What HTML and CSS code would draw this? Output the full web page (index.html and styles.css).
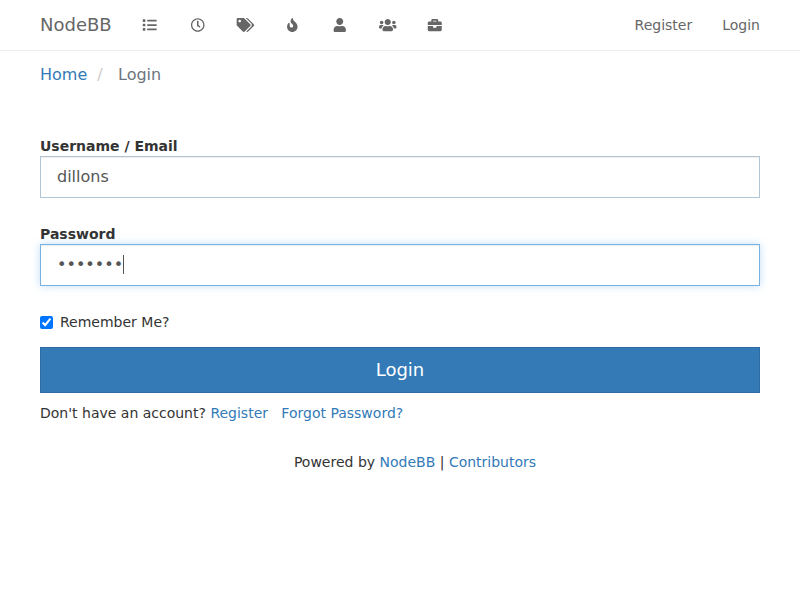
FILE: index.html
```html
<!DOCTYPE html>
<html lang="en">
<head>
<meta charset="utf-8">
<title>Login | NodeBB</title>
<link rel="stylesheet" href="styles.css">
</head>
<body>
<header class="navbar">
  <a class="brand" href="#">NodeBB</a>
  <nav class="nav-icons">
    <a href="#"><svg viewBox="-64 0 640 512"><path d="M80 368H16a16 16 0 0 0-16 16v64a16 16 0 0 0 16 16h64a16 16 0 0 0 16-16v-64a16 16 0 0 0-16-16zm0-320H16A16 16 0 0 0 0 64v64a16 16 0 0 0 16 16h64a16 16 0 0 0 16-16V64a16 16 0 0 0-16-16zm0 160H16a16 16 0 0 0-16 16v64a16 16 0 0 0 16 16h64a16 16 0 0 0 16-16v-64a16 16 0 0 0-16-16zm416 176H176a16 16 0 0 0-16 16v32a16 16 0 0 0 16 16h320a16 16 0 0 0 16-16v-32a16 16 0 0 0-16-16zm0-320H176a16 16 0 0 0-16 16v32a16 16 0 0 0 16 16h320a16 16 0 0 0 16-16V80a16 16 0 0 0-16-16zm0 160H176a16 16 0 0 0-16 16v32a16 16 0 0 0 16 16h320a16 16 0 0 0 16-16v-32a16 16 0 0 0-16-16z"/></svg></a>
    <a href="#"><svg viewBox="-64 0 640 512"><path d="M256 8C119 8 8 119 8 256s111 248 248 248 248-111 248-248S393 8 256 8zm0 448c-110.5 0-200-89.5-200-200S145.500 56 256 56s200 89.500 200 200-89.500 200-200 200zm61.800-104.400l-84.900-61.700c-3.100-2.300-4.900-5.900-4.900-9.700V116c0-6.600 5.400-12 12-12h32c6.600 0 12 5.400 12 12v141.700l66.800 48.600c5.400 3.900 6.500 11.400 2.600 16.800L334.600 349c-3.900 5.300-11.400 6.500-16.800 2.600z"/></svg></a>
    <a href="#"><svg viewBox="-24 0 640 512" overflow="visible"><path d="M497.941 225.941L286.059 14.059A48 48 0 0 0 252.118 0H48C21.490 0 0 21.490 0 48v204.118a48 48 0 0 0 14.059 33.941l211.882 211.882c18.744 18.745 49.136 18.746 67.882 0l204.118-204.118c18.745-18.745 18.745-49.137 0-67.882zM112 160c-26.510 0-48-21.490-48-48s21.490-48 48-48 48 21.490 48 48-21.490 48-48 48zm513.941 133.823L421.823 497.941c-18.745 18.745-49.137 18.745-67.882 0l-.36-.36L527.640 323.522c16.999-16.999 26.362-39.600 26.362-63.640s-9.362-46.641-26.362-63.640L331.397 0h48.721a48 48 0 0 1 33.941 14.059l211.882 211.882c18.745 18.745 18.745 49.137 0 67.882z"/></svg></a>
    <a href="#"><svg viewBox="-112 0 640 512"><path d="M216 23.860c0-23.800-30.650-32.770-44.150-13.040C48 191.850 224 200 224 288c0 35.630-29.110 64.460-64.850 63.990-35.170-.45-63.150-29.770-63.150-64.940v-85.510c0-21.700-26.470-32.230-41.430-16.500C27.800 213.160 0 261.330 0 320c0 105.870 86.130 192 192 192s192-86.130 192-192c0-170.290-168-193-168-296.140z"/></svg></a>
    <a href="#"><svg viewBox="-96 0 640 512"><path d="M224 256c70.700 0 128-57.300 128-128S294.700 0 224 0 96 57.300 96 128s57.300 128 128 128zm89.600 32h-16.700c-22.200 10.200-46.900 16-72.900 16s-50.600-5.800-72.900-16h-16.700C60.200 288 0 348.200 0 422.400V464c0 26.500 21.500 48 48 48h352c26.500 0 48-21.500 48-48v-41.600c0-74.200-60.200-134.400-134.400-134.400z"/></svg></a>
    <a href="#"><svg viewBox="0 0 640 512"><path d="M96 224c35.300 0 64-28.700 64-64s-28.700-64-64-64-64 28.700-64 64 28.700 64 64 64zm448 0c35.300 0 64-28.700 64-64s-28.700-64-64-64-64 28.700-64 64 28.700 64 64 64zm32 32h-64c-17.600 0-33.500 7.100-45.100 18.600 40.300 22.100 68.900 62 75.100 109.400h66c17.700 0 32-14.300 32-32v-32c0-35.300-28.700-64-64-64zm-256 0c61.900 0 112-50.100 112-112S381.900 32 320 32 208 82.100 208 144s50.100 112 112 112zm76.800 32h-8.300c-20.800 10-43.900 16-68.500 16s-47.600-6-68.500-16h-8.300C179.600 288 128 339.600 128 403.200V432c0 26.500 21.500 48 48 48h288c26.500 0 48-21.500 48-48v-28.800c0-63.600-51.600-115.200-115.200-115.200zm-223.700-13.400C161.500 263.100 145.600 256 128 256H64c-35.300 0-64 28.700-64 64v32c0 17.700 14.300 32 32 32h65.900c6.300-47.400 34.900-87.300 75.200-109.400z"/></svg></a>
    <a href="#"><svg viewBox="-64 0 640 512"><path d="M320 336c0 8.840-7.160 16-16 16h-96c-8.840 0-16-7.160-16-16v-48H0v144c0 25.600 22.400 48 48 48h416c25.600 0 48-22.400 48-48V288H320v48zm144-208h-80V80c0-25.600-22.400-48-48-48H176c-25.600 0-48 22.400-48 48v48H48c-25.600 0-48 22.400-48 48v80h512v-80c0-25.600-22.400-48-48-48zm-144 0H192V96h128v32z"/></svg></a>
  </nav>
  <nav class="nav-account">
    <a href="#">Register</a>
    <a href="#">Login</a>
  </nav>
</header>
<main class="container">
  <ol class="breadcrumb">
    <li><a href="#">Home</a></li>
    <li class="active">Login</li>
  </ol>
  <form class="login-form">
    <div class="field">
      <label for="username">Username / Email</label>
      <input class="control" id="username" type="text" value="dillons">
    </div>
    <div class="field">
      <label for="password">Password</label>
      <div class="control-wrap">
        <input class="control focused" id="password" type="password" value="secret1">
        <span class="caret"></span>
      </div>
    </div>
    <label class="remember"><input type="checkbox" checked>Remember Me?</label>
    <button class="submit" type="button">Login</button>
    <p class="links">Don't have an account? <a href="#">Register</a><a class="forgot" href="#">Forgot Password?</a></p>
  </form>
  <footer class="footer">Powered by <a href="#">NodeBB</a> | <a href="#">Contributors</a></footer>
</main>
</body>
</html>
```
FILE: styles.css
```css
* {
  box-sizing: border-box;
}

body {
  margin: 0;
  background: #fff;
  color: #333;
  font: 14px/20px "DejaVu Sans", sans-serif;
}

a {
  color: #337ab7;
  text-decoration: none;
}

.navbar {
  display: flex;
  align-items: center;
  height: 51px;
  padding: 0 40px;
  border-bottom: 1px solid #eee;
}

.navbar a {
  color: #666;
}

.navbar .brand {
  width: 101.4px;
  font-size: 18px;
}

.nav-icons {
  display: flex;
  gap: 30px;
}

.nav-icons a {
  display: flex;
}

.nav-icons svg {
  width: 17.5px;
  height: 14px;
  overflow: visible;
  fill: currentColor;
}

.nav-account {
  display: flex;
  gap: 30px;
  margin-left: auto;
}

.container {
  padding: 12px 40px 0;
}

.breadcrumb {
  display: flex;
  margin: 0 0 49px;
  padding: 0;
  list-style: none;
  font-size: 16px;
  line-height: 24px;
}

.breadcrumb .active {
  color: #6c757d;
}

.breadcrumb .active::before {
  content: "/";
  padding: 0 15.4px 0 10px;
  color: #ccc;
}

.field {
  margin-bottom: 26px;
}

.field label {
  display: block;
  font-weight: bold;
}

.control-wrap {
  position: relative;
}

.control {
  display: block;
  width: 100%;
  height: 42px;
  padding: 6px 16px 8px;
  border: 1px solid #b0c5d6;
  border-radius: 0;
  outline: 0;
  background: #fff;
  box-shadow: inset 0 1px 1px rgba(0, 0, 0, .075);
  color: #555;
  font: 16px "DejaVu Sans", sans-serif;
}

.focused {
  border-color: #76b3e1;
  box-shadow: inset 0 1px 1px rgba(0, 0, 0, .075), 0 0 8px rgba(102, 175, 233, .4);
}

.caret {
  position: absolute;
  left: 83px;
  top: 11px;
  width: 1px;
  height: 19px;
  background: #555;
}

.remember {
  display: flex;
  align-items: center;
  gap: 7px;
}

.remember input {
  width: 13px;
  height: 13px;
  margin: 1px 0 0;
}

.submit {
  display: block;
  width: 100%;
  height: 46px;
  margin-top: 15px;
  padding: 0;
  border: 1px solid #2e6da4;
  background: #337ab7;
  color: #fff;
  font: 18px/24px "DejaVu Sans", sans-serif;
}

.links {
  margin: 10px 0 29px;
}

.forgot {
  margin-left: 13.35px;
}

.footer {
  padding-left: 30px;
  text-align: center;
}
```
